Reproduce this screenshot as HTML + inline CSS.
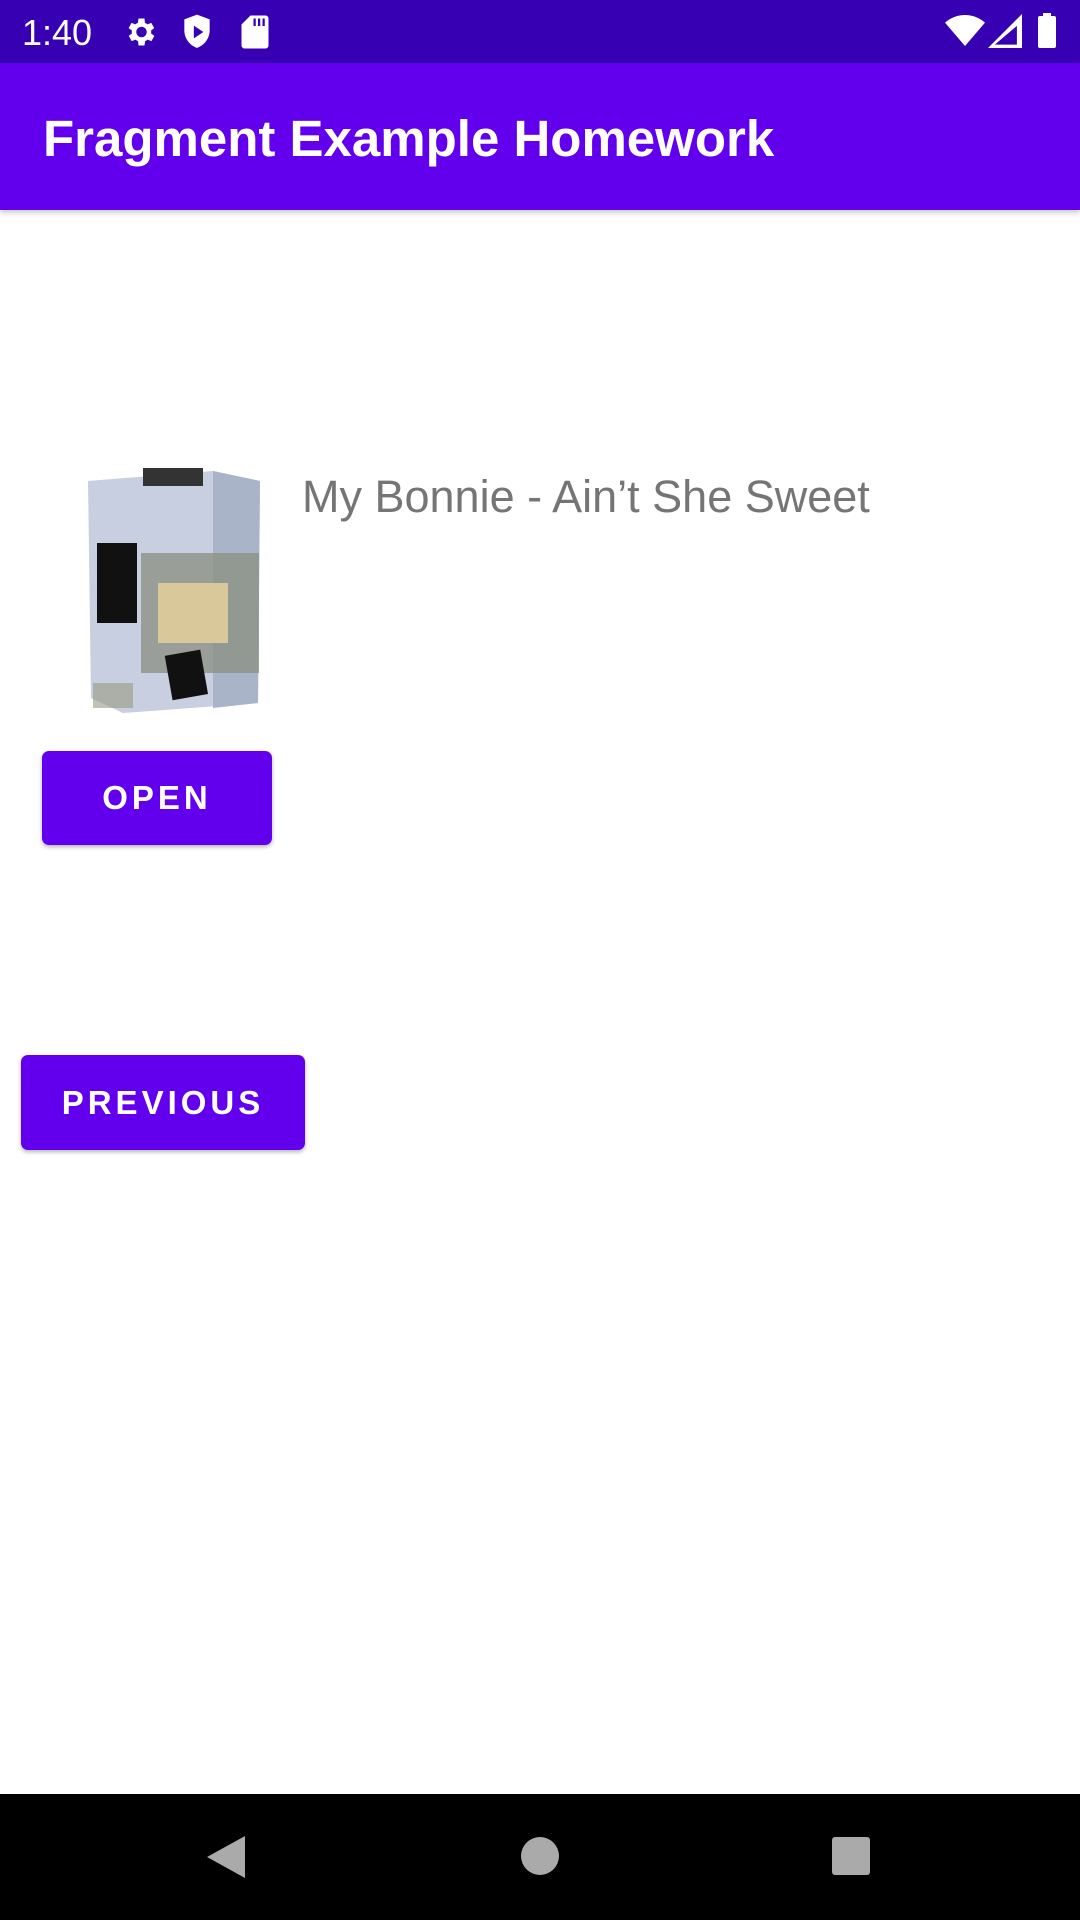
<!DOCTYPE html>
<html><head><meta charset="utf-8"><style>
body{margin:0;width:1080px;height:1920px;position:relative;background:#fff;font-family:"Liberation Sans",sans-serif;overflow:hidden}
.sb{position:absolute;left:0;top:0;width:1080px;height:63px;background:#3700b3}
.ab{position:absolute;left:0;top:63px;width:1080px;height:147px;background:#6200ee;box-shadow:0 3px 5px rgba(0,0,0,.2)}
.ab span{position:absolute;left:43px;top:46px;color:#fff;font-size:51px;font-weight:bold;letter-spacing:0}
.btn{position:absolute;background:#6200ee;color:#fff;border-radius:7px;font-size:33px;font-weight:bold;letter-spacing:4px;display:flex;align-items:center;justify-content:center;box-shadow:0 2px 4px rgba(0,0,0,.3)}
.nav{position:absolute;left:0;top:1794px;width:1080px;height:126px;background:#000}
</style></head><body>
<div class="sb">
<span style="position:absolute;left:22px;top:12px;color:#fff;font-size:36px">1:40</span>
<svg style="position:absolute;left:122px;top:14px" width="36" height="36" viewBox="0 0 24 24"><path fill="#fff" d="M19.4 13a7.5 7.5 0 000-2l2.1-1.6-2-3.5-2.5 1a7 7 0 00-1.7-1L15 3h-4l-.4 2.9a7 7 0 00-1.7 1l-2.5-1-2 3.5L6.6 11a7.5 7.5 0 000 2l-2.1 1.6 2 3.5 2.5-1a7 7 0 001.7 1L11 21h4l.4-2.9a7 7 0 001.7-1l2.5 1 2-3.5zM13 15.5a3.5 3.5 0 110-7 3.5 3.5 0 010 7z"/></svg>
<svg style="position:absolute;left:180px;top:13px" width="34" height="38" viewBox="0 0 20 24"><path fill="#fff" d="M10 1L2 4v7c0 5 3.4 9.6 8 11 4.6-1.4 8-6 8-11V4zM8 8l6 4-6 4z"/></svg>
<svg style="position:absolute;left:240px;top:14px" width="30" height="36" viewBox="0 0 20 24"><path fill="#fff" d="M7 1h10a2 2 0 012 2v18a2 2 0 01-2 2H3a2 2 0 01-2-2V7zM9 3v5h1.5V3zM12 3v5h1.5V3zM15 3v5h1.5V3z"/></svg>
<svg style="position:absolute;left:945px;top:14px" width="40" height="34" viewBox="0 0 24 20"><path fill="#fff" d="M12 19L0 5a18 18 0 0124 0z"/></svg>
<svg style="position:absolute;left:988px;top:14px" width="34" height="34" viewBox="0 0 20 20"><path fill="#fff" d="M20 0v20H0zM17 7L4 18h13z"/></svg>
<div style="position:absolute;left:1038px;top:16px;width:18px;height:32px;background:#fff;border-radius:2px"></div>
<div style="position:absolute;left:1043px;top:13px;width:8px;height:4px;background:#fff"></div>
</div>
<div class="ab"><span>Fragment Example Homework</span></div>
<svg style="position:absolute;left:83px;top:463px" width="177" height="250" viewBox="0 0 177 250">
<polygon points="5,18 130,8 177,18 175,240 40,250 8,235" fill="#c8cfe0"/>
<polygon points="130,8 177,18 175,240 130,245" fill="#aab4c8"/>
<rect x="60" y="5" width="60" height="18" fill="#333"/>
<rect x="14" y="80" width="40" height="80" fill="#111"/>
<rect x="58" y="90" width="118" height="120" fill="#8a8f80" opacity=".75"/>
<rect x="75" y="120" width="70" height="60" fill="#d8c89a"/>
<rect x="85" y="190" width="36" height="45" fill="#111" transform="rotate(-10 100 210)"/>
<rect x="10" y="220" width="40" height="25" fill="#9a9a80" opacity=".6"/>
</svg>
<div style="position:absolute;left:302px;top:471px;font-size:45px;color:#757575">My Bonnie - Ain’t She Sweet</div>
<div class="btn" style="left:42px;top:751px;width:230px;height:94px">OPEN</div>
<div class="btn" style="left:21px;top:1055px;width:284px;height:95px">PREVIOUS</div>
<div class="nav">
<svg style="position:absolute;left:205px;top:40px" width="42" height="46" viewBox="0 0 42 46"><polygon points="40,2 40,44 2,23" fill="#aaa"/></svg>
<div style="position:absolute;left:521px;top:43px;width:38px;height:38px;border-radius:50%;background:#aaa"></div>
<div style="position:absolute;left:832px;top:43px;width:38px;height:38px;border-radius:3px;background:#aaa"></div>
</div>
</body></html>
